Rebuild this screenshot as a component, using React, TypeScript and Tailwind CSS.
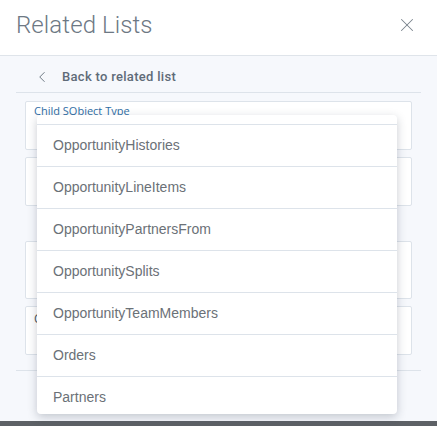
import { X, ChevronLeft } from 'lucide-react';

const options = [
  'OpportunityHistories',
  'OpportunityLineItems',
  'OpportunityPartnersFrom',
  'OpportunitySplits',
  'OpportunityTeamMembers',
  'Orders',
  'Partners',
];

export default function App() {
  return (
    <div className="w-[437px] h-[426px] flex flex-col bg-white overflow-hidden" style={{ fontFamily: 'Roboto, "Liberation Sans", sans-serif' }}>
      {/* Header */}
      <div className="h-[56px] flex-shrink-0 flex items-center justify-between pl-4 pr-[19px] border-b border-[#dfe4ea]">
        <span className="text-[24px] font-light text-[#6d7884] tracking-[0.1px] -mt-[6px]">Related Lists</span>
        <X size={22} strokeWidth={1.1} className="text-[#7a838c] -mt-[6px]" />
      </div>

      {/* Body */}
      <div className="flex-1 bg-[#f6f8fc] px-4">
        <div className="h-[37px] flex items-center gap-[11px] pl-5 pt-[6px] border-b border-[#dde3ea]">
          <ChevronLeft size={18} strokeWidth={1.3} className="text-[#6b7682] -ml-[3px]" />
          <span className="text-[13px] font-medium text-[#5f6b78] tracking-[0.3px]">Back to related list</span>
        </div>

        <div className="relative pt-[8px] pb-[15px] border-b border-[#dde3ea] px-[9px]">
          <div className="h-[49px] bg-white border border-[#dde3ea] rounded-[2px] px-[8px] pt-[2px]">
            <div className="text-[11px] leading-[14px] text-[#2f6ea5]" style={{ fontFamily: '"Open Sans", "Noto Sans", sans-serif' }}>Child SObject Type</div>
          </div>
          <div className="h-[49px] mt-[7px] bg-white border border-[#dde3ea] rounded-[2px]" />
          <div className="h-[58px] mt-[35px] bg-white border border-[#dde3ea] rounded-[2px]" />
          <div className="h-[49px] mt-[7px] bg-white border border-[#dde3ea] rounded-[2px] px-[8px] pt-[5px]">
            <div className="text-[12px] leading-[14px] text-[#4a5560]" style={{ fontFamily: '"Open Sans", "Noto Sans", sans-serif' }}>C</div>
          </div>

          {/* Dropdown */}
          <div className="absolute left-[21px] top-[22px] w-[360px] h-[299px] bg-white rounded-[4px] overflow-hidden shadow-[0_3px_10px_rgba(40,50,70,0.25)] pt-[9px]">
            {options.map(o => (
              <div key={o} className="h-[42px] flex items-center px-4 border-t border-[#dde3ea] text-[14px] text-[#6b7177]" style={{ fontFamily: '"Liberation Sans", Arial, sans-serif' }}>
                {o}
              </div>
            ))}
          </div>
        </div>
      </div>

      <div className="h-[5px] flex-shrink-0 bg-[#5d6166]" />
    </div>
  );
}
